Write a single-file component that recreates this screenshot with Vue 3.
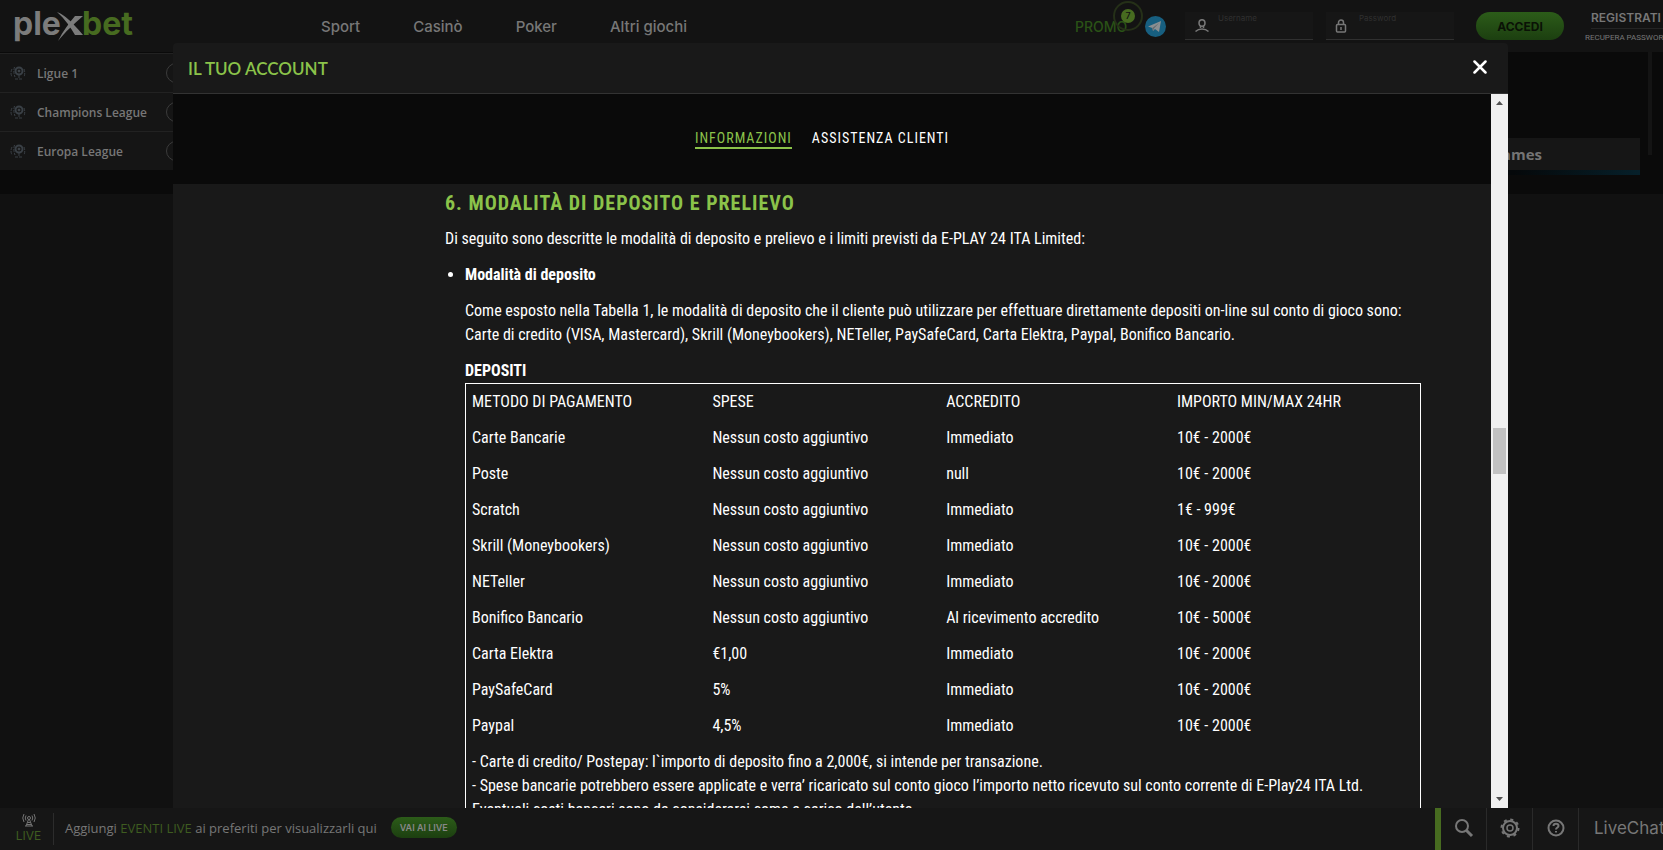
<script setup>
const nav = ['Sport', 'Casinò', 'Poker', 'Altri giochi']
const leagues = ['Ligue 1', 'Champions League', 'Europa League']
const columns = ['METODO DI PAGAMENTO', 'SPESE', 'ACCREDITO', 'IMPORTO MIN/MAX 24HR']
const free = 'Nessun costo aggiuntivo'
const deposits = [
  ['Carte Bancarie', free, 'Immediato', '10€ - 2000€'],
  ['Poste', free, 'null', '10€ - 2000€'],
  ['Scratch', free, 'Immediato', '1€ - 999€'],
  ['Skrill (Moneybookers)', free, 'Immediato', '10€ - 2000€'],
  ['NETeller', free, 'Immediato', '10€ - 2000€'],
  ['Bonifico Bancario', free, 'Al ricevimento accredito', '10€ - 5000€'],
  ['Carta Elektra', '€1,00', 'Immediato', '10€ - 2000€'],
  ['PaySafeCard', '5%', 'Immediato', '10€ - 2000€'],
  ['Paypal', '4,5%', 'Immediato', '10€ - 2000€'],
]
</script>

<template>
  <div class="page">
    <header class="topbar">
      <a href="#" class="logo" aria-label="plexbet">
        <svg width="130" height="52" viewBox="0 0 130 52">
          <text x="0" y="35" class="logo-text" fill="#7c7c7c">ple</text>
          <path d="M44 12 C52 15 58 21 70 35 L62 35 C58 28 52 19 44 12Z" fill="#7c7c7c" />
          <path d="M70 16 L62 16 C56 23 50 31 45 41 C53 31 60 25 70 16Z" fill="#7c7c7c" />
          <text x="69" y="35" class="logo-text" fill="#476b20">bet</text>
        </svg>
      </a>
      <nav class="nav">
        <a v-for="n in nav" :key="n" href="#">{{ n }}</a>
      </nav>
      <div class="account">
        <a href="#" class="promo">PROMO<span class="badge">7</span></a>
        <a href="#" class="telegram" aria-label="Telegram">
          <svg width="21" height="21" viewBox="0 0 21 21">
            <circle cx="10.5" cy="10.5" r="10.5" fill="#175f80" />
            <path d="M3 10.5 L16 5 L14 16 L10 13 L8 15 L7.300 12Z" fill="#8a8f92" />
            <path d="M7.300 12 L14 7 L9 12.500 L8 15Z" fill="#656b70" />
          </svg>
        </a>
        <div class="field">
          <svg width="16" height="14" viewBox="0 0 16 14" fill="none" stroke="#777" stroke-width="1.500">
            <ellipse cx="8" cy="4" rx="3" ry="3.300" />
            <path d="M6.500 7 V9 M9.500 7 V9 M1.500 12.500 C5 9 11 9 14.500 12.500" />
          </svg>
          <label for="user">Username</label>
          <input id="user" type="text" />
        </div>
        <div class="field">
          <svg width="16" height="14" viewBox="0 0 16 14" fill="none" stroke="#777" stroke-width="1.500">
            <rect x="1.500" y="5.500" width="9" height="7.500" rx="1" />
            <path d="M3.500 5.500 V3.500 a2.500 2.500 0 0 1 5 0 V5.500 M6 8 V11" />
          </svg>
          <label for="pass">Password</label>
          <input id="pass" type="password" />
        </div>
        <button class="login">ACCEDI</button>
        <div class="links">
          <a href="#" class="register">REGISTRATI</a>
          <a href="#" class="recover">RECUPERA PASSWORD</a>
        </div>
      </div>
    </header>

    <main class="stage">
      <div class="backdrop">
        <ul class="leagues">
          <li v-for="l in leagues" :key="l">
            <svg width="16" height="16" viewBox="0 0 16 16" fill="none" stroke="#3a4046">
              <circle cx="9" cy="6" r="3.500" stroke-width="2" />
              <circle cx="9" cy="6" r="1" fill="#555a5e" />
              <path d="M2 4 Q0 8 2 12 M4.500 2 Q3 7 5 12 M14 4 Q15.500 8 14 12 M5 14 H13 M9 10 V13" stroke-dasharray="3 1" />
            </svg>
            <span>{{ l }}</span>
            <i class="pick"></i>
          </li>
        </ul>
        <aside class="games">
          <h2>Games</h2>
          <div class="strip"></div>
        </aside>
        <div class="rail"></div>
      </div>

      <div class="overlay">
        <section class="modal" role="dialog" aria-labelledby="modal-title">
          <div class="modal-head">
            <h1 id="modal-title">IL TUO ACCOUNT</h1>
            <button class="close" aria-label="Chiudi">
              <svg width="14" height="14" viewBox="0 0 14 14" stroke="#fff" stroke-width="2.500" stroke-linecap="round">
                <path d="M1.500 1.500 L12.500 12.500 M12.500 1.500 L1.500 12.500" />
              </svg>
            </button>
          </div>
          <div class="modal-main">
            <div class="pane">
              <nav class="tabs">
                <a href="#" class="active">INFORMAZIONI</a>
                <a href="#">ASSISTENZA CLIENTI</a>
              </nav>
              <article class="content">
                <h2>6. MODALITÀ DI DEPOSITO E PRELIEVO</h2>
                <p>Di seguito sono descritte le modalità di deposito e prelievo e i limiti previsti da E-PLAY 24 ITA Limited:</p>
                <ul>
                  <li>
                    <p><strong>Modalità di deposito</strong></p>
                    <p>
                      Come esposto nella Tabella 1, le modalità di deposito che il cliente può utilizzare per effettuare direttamente depositi on-line sul conto di gioco sono:<br />
                      Carte di credito (VISA, Mastercard), Skrill (Moneybookers), NETeller, PaySafeCard, Carta Elektra, Paypal, Bonifico Bancario.
                    </p>
                    <table>
                      <caption>DEPOSITI</caption>
                      <thead>
                        <tr><th v-for="c in columns" :key="c" scope="col">{{ c }}</th></tr>
                      </thead>
                      <tbody>
                        <tr v-for="row in deposits" :key="row[0]">
                          <td v-for="(cell, i) in row" :key="i">{{ cell }}</td>
                        </tr>
                        <tr>
                          <td colspan="4">
                            - Carte di credito/ Postepay: l`importo di deposito fino a 2,000€, si intende per transazione.<br />
                            - Spese bancarie potrebbero essere applicate e verra’ ricaricato sul conto gioco l’importo netto ricevuto sul conto corrente di E-Play24 ITA Ltd.<br />
                            Eventuali costi bancari sono da considerarsi come a carico dell’utente.
                          </td>
                        </tr>
                      </tbody>
                    </table>
                  </li>
                </ul>
              </article>
            </div>
            <div class="scrollbar">
              <svg width="7" height="4" viewBox="0 0 7 4" fill="#505050"><path d="M0 4 L3.500 0 L7 4Z" /></svg>
              <div class="track"><div class="thumb"></div></div>
              <svg width="7" height="4" viewBox="0 0 7 4" fill="#505050"><path d="M0 0 L3.500 4 L7 0Z" /></svg>
            </div>
          </div>
        </section>
      </div>
    </main>

    <footer class="bottombar">
      <div class="live">
        <svg width="16" height="14" viewBox="0 0 16 14" fill="none" stroke="#747474">
          <circle cx="8" cy="5" r="1.500" />
          <path d="M5 7.500 Q3.500 5 5 2.500 M11 7.500 Q12.500 5 11 2.500 M3 9 Q.5 5 3 1 M13 9 Q15.500 5 13 1 M7.500 6.500 L5 13 M8.500 6.500 L11 13 M4 13 H12 M6.500 9.500 H9.500 M6 11.500 H10" />
        </svg>
        <span>LIVE</span>
      </div>
      <p class="hint">Aggiungi <b>EVENTI LIVE</b> ai preferiti per visualizzarli qui</p>
      <button class="go-live">VAI AI LIVE</button>
      <div class="tools">
        <button aria-label="Cerca">
          <svg width="20" height="20" viewBox="0 0 20 20" fill="none" stroke="#777" stroke-width="2">
            <circle cx="8" cy="8" r="6" /><path d="M12.500 12.500 L18 18" stroke-width="3" />
          </svg>
        </button>
        <button aria-label="Impostazioni">
          <svg width="20" height="20" viewBox="0 0 20 20" fill="none" stroke="#777" stroke-width="2">
            <circle cx="10" cy="10" r="7" /><circle cx="10" cy="10" r="3" stroke-width="1.500" />
            <circle cx="10" cy="10" r="8.500" stroke-dasharray="3 3.675" />
          </svg>
        </button>
        <button aria-label="Aiuto">
          <svg width="20" height="20" viewBox="0 0 20 20" fill="none" stroke="#777" stroke-width="2">
            <circle cx="10" cy="10" r="7.500" />
            <path d="M7.500 8 C7.500 5 12.500 5 12.500 8 C12.500 9.500 10 9.500 10 11.500 M10 13 V14.500" />
          </svg>
        </button>
        <button class="chat">LiveChat</button>
      </div>
    </footer>
  </div>
</template>

<style>
html, body { margin: 0; background: #111; }
</style>

<style scoped>
* { box-sizing: border-box; }
.page {
  display: flex; flex-direction: column; height: 100vh; overflow: hidden;
  background: #111; color: #777; font-family: Inter, "Liberation Sans", sans-serif;
}
a { color: inherit; text-decoration: none; }
button { border: 0; padding: 0; font-family: inherit; cursor: pointer; color: inherit; background: none; }
svg { display: block; flex: none; }
h1, h2, p, ul { margin: 0; padding: 0; }

.topbar { display: flex; align-items: center; height: 52px; flex: none; background: #131313; }
.logo { width: 321px; padding-left: 13px; flex: none; }
.logo svg { overflow: visible; }
.logo-text { font: 700 32px Inter, sans-serif; }
.nav { display: flex; gap: 53px; font-size: 15px; font-weight: 500; white-space: nowrap; }
.account { display: flex; align-items: center; height: 100%; margin-left: auto; }
.promo { position: relative; width: 70px; font-size: 14px; font-weight: 500; color: #2a5216; }
.badge {
  position: absolute; left: 46px; top: -9px; width: 14px; height: 14px; border-radius: 50%;
  background: #476b20; color: #111; font-size: 9px; line-height: 14px; text-align: center;
  outline: 2px solid #253018; outline-offset: 6px;
}
.telegram { margin-right: 19px; }
.field {
  position: relative; display: flex; align-items: center; width: 128px; height: 28px;
  margin-right: 13px; padding-left: 9px; background: #161616; border-bottom: 1px solid #303030;
}
.field label { position: absolute; left: 33px; top: 1px; font-size: 8px; line-height: 10px; color: #303030; }
.field input { flex: 1; min-width: 0; height: 100%; border: 0; outline: 0; background: none; color: #777; }
.login {
  width: 88px; height: 28px; margin: 0 21px 0 9px; border-radius: 14px;
  background: linear-gradient(#2c5c19, #1c3f10); color: #0a1206; font-size: 12px; font-weight: 700;
}
.links { width: 78px; overflow: hidden; white-space: nowrap; }
.register { display: block; margin-left: 6px; padding-bottom: 3px; border-bottom: 1px solid #242424; font-size: 12px; font-weight: 600; }
.recover { display: block; padding-top: 4px; font: 8px/10px Roboto, sans-serif; }

.stage { position: relative; flex: 1; min-height: 0; }
.backdrop { display: flex; height: 142px; background: #0a0a0a; }
.leagues { width: 200px; padding-top: 1px; list-style: none; font: 600 12px "Open Sans", sans-serif; }
.leagues li {
  display: flex; align-items: center; gap: 11px; height: 39px; padding-left: 10px;
  background: #151515; border-top: 1px solid #222;
}
.pick { width: 20px; height: 20px; margin-left: auto; margin-right: 14px; border: 1px solid #3b3b3b; border-radius: 50%; }
.games { width: 180px; margin-left: auto; padding-top: 86px; }
.games h2 { height: 32px; padding-left: 31px; background: #161616; font: 700 15px/32px "Open Sans", sans-serif; color: #747474; }
.strip { height: 5px; background: linear-gradient(90deg, #05080a 30%, #06202a); }
.rail { width: 4px; height: 103px; margin: 0 11px 0 8px; background: #141414; }

.overlay { position: absolute; inset: -9px 155px 0 173px; display: flex; }
.modal { flex: 1; min-width: 0; display: flex; flex-direction: column; border-radius: 4px 4px 0 0; background: #191919; overflow: hidden; }
.modal-head { display: flex; align-items: center; justify-content: space-between; flex: none; height: 51px; padding: 0 21px 0 15px; border-bottom: 1px solid #333; }
.modal-head h1 { font: 600 17px Lato, sans-serif; color: #8bc34a; }
.close { padding-bottom: 3px; }
.modal-main { display: flex; flex: 1; min-height: 0; }
.pane { flex: 1; min-width: 0; overflow: hidden; font-family: "Roboto Condensed", "Liberation Sans Narrow", Roboto, sans-serif; color: #fff; }
.tabs { display: flex; justify-content: center; align-items: center; gap: 20px; height: 90px; padding-right: 20px; background: #0a0a0a; font-size: 14px; letter-spacing: 1px; }
.tabs a { height: 20px; line-height: 18px; border-bottom: 2px solid transparent; }
.tabs .active { color: #8bc34a; border-color: #8bc34a; }
.content { padding: 7px 70px 0 272px; font-size: 16px; line-height: 24px; }
.content h2 { margin-bottom: 12px; font-size: 20px; font-weight: 700; letter-spacing: 1px; color: #8bc34a; }
.content p { margin-bottom: 12px; }
.content ul { padding-left: 20px; }
table { width: 100%; table-layout: fixed; border: 1px solid #fff; border-spacing: 0; }
caption { text-align: left; font-weight: 700; }
th, td { padding: 6px; text-align: left; font-weight: 400; }
th:nth-child(1) { width: 25.2%; }
th:nth-child(2) { width: 24.5%; }
th:nth-child(3) { width: 24.2%; }
.scrollbar { display: flex; flex-direction: column; align-items: center; width: 17px; padding: 7px 0; background: #f0f0f0; }
.track { flex: 1; width: 13px; padding-top: 323px; }
.thumb { height: 46px; background: #c1c1c1; }

.bottombar { display: flex; align-items: center; flex: none; height: 42px; padding-left: 4px; background: #161616; }
.live { display: flex; flex-direction: column; align-items: center; gap: 2px; width: 50px; padding-bottom: 3px; border-right: 1px solid #2c2c2c; font-size: 12px; line-height: 13px; color: #3e5c20; }
.hint { padding: 0 14px 3px 11px; font: 13px "Open Sans", sans-serif; white-space: nowrap; }
.hint b { font-weight: 400; color: #3e5c20; }
.go-live { width: 66px; height: 21px; margin-bottom: 3px; border-radius: 11px; background: linear-gradient(#2c5c19, #1c3f10); font-size: 9px; font-weight: 600; color: #888; }
.tools { display: flex; height: 100%; margin-left: auto; border-left: 6px solid #476b20; }
.tools button { display: grid; place-items: center; width: 46px; padding-bottom: 3px; border-right: 1px solid #2a2a2a; }
.tools .chat { justify-items: start; width: 84px; padding-left: 15px; border: 0; font-size: 17px; }
</style>
